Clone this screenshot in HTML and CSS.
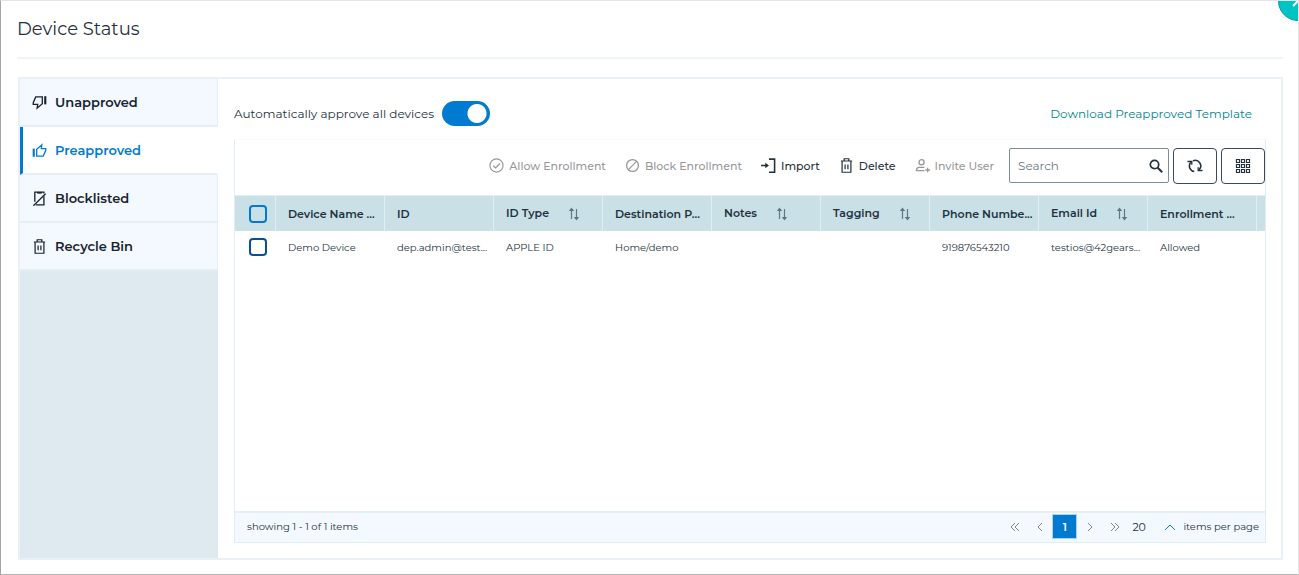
FILE: index.html
```html
<!DOCTYPE html>
<html lang="en">
<head>
  <meta charset="UTF-8">
  <meta name="viewport" content="width=device-width, initial-scale=1.0">
  <title>Device Status</title>
  <link rel="stylesheet" href="styles.css">
</head>
<body>

  <svg class="sprite" aria-hidden="true">
    <symbol id="i-trash" viewBox="0 0 16 16">
      <path d="M2 3.200h12M5.500 2.700V.8h5v1.900M3.300 3.500v11.700h9.400V3.500M6.500 7v5M9.500 7v5" fill="none" stroke="currentColor" stroke-width="1.300"/>
    </symbol>
    <symbol id="i-sort" viewBox="0 0 12 14">
      <path d="M3.500 2v10M8.500 2v10" fill="none" stroke="currentColor" stroke-width="1.200"/>
      <path d="M.8 4 3.500.5 6.200 4zM5.800 10l2.700 3.500L11.200 10z" fill="currentColor"/>
    </symbol>
  </svg>

  <div class="modal">
    <header class="modal-header">
      <h1>Device Status</h1>
      <button class="close-btn" type="button" aria-label="Close">
        <svg viewBox="0 0 14 14"><path d="M2 2l10 10M12 2L2 12" fill="none" stroke="currentColor" stroke-width="2"/></svg>
      </button>
    </header>

    <div class="panel">
      <nav class="sidebar">
        <a href="#" class="tab">
          <svg viewBox="0 0 16 16"><path d="M11 2H4L1.300 8.200V10h4.800l-.6 4L11 9.300z" fill="none" stroke="currentColor" stroke-width="1.400"/><path d="M13 1.300h2.300V10H13z" fill="currentColor"/></svg>
          Unapproved
        </a>
        <a href="#" class="tab active">
          <svg viewBox="0 0 16 16"><path d="M5 14h7l2.700-6.200V6H9.900l.6-4L5 6.700z" fill="none" stroke="currentColor" stroke-width="1.400"/><path d="M.7 6H3v8.700H.7z" fill="currentColor"/></svg>
          Preapproved
        </a>
        <a href="#" class="tab">
          <svg viewBox="0 0 16 16"><path d="M3 11.500V1.200h9.700v1.500M12.700 5.500v9.300H4" fill="none" stroke="currentColor" stroke-width="1.400"/><path d="M5.500 1h5v1.800h-5z" fill="currentColor"/><path d="M14.500 3 1.500 15.700" stroke="currentColor" stroke-width="1.400"/></svg>
          Blocklisted
        </a>
        <a href="#" class="tab">
          <svg viewBox="0 0 16 16"><use href="#i-trash"/></svg>
          Recycle Bin
        </a>
      </nav>

      <main class="content">
        <div class="top-row">
          <label for="auto-approve">Automatically approve all devices</label>
          <input class="switch" type="checkbox" id="auto-approve" checked>
          <a href="#" class="template-link">Download Preapproved Template</a>
        </div>

        <div class="grid">
          <div class="toolbar">
            <button class="tool" type="button" disabled>
              <svg viewBox="0 0 16 16"><circle cx="8" cy="8" r="7" fill="none" stroke="currentColor" stroke-width="1.300"/><path d="M4.500 8.200l2.500 2.400 4.700-4.800" fill="none" stroke="currentColor" stroke-width="1.400"/></svg>
              Allow Enrollment
            </button>
            <button class="tool" type="button" disabled>
              <svg viewBox="0 0 16 16"><circle cx="8" cy="8" r="6.300" fill="none" stroke="currentColor" stroke-width="1.400"/><path d="M12.400 3.600l-8.800 8.800" stroke="currentColor" stroke-width="1.400"/></svg>
              Block Enrollment
            </button>
            <button class="tool" type="button">
              <svg viewBox="0 0 16 16"><path d="M8.500 1.200h6v14h-6M0 8h7" fill="none" stroke="currentColor" stroke-width="1.700"/><path d="M4.500 5 8.500 8l-4 3z" fill="currentColor"/></svg>
              Import
            </button>
            <button class="tool" type="button">
              <svg viewBox="0 0 16 16"><use href="#i-trash"/></svg>
              Delete
            </button>
            <button class="tool" type="button" disabled>
              <svg viewBox="0 0 16 16"><circle cx="7" cy="4.500" r="2.700" fill="none" stroke="currentColor" stroke-width="1.400"/><path d="M10 10H4.500C2.500 10 1.500 11 1.500 13.500h8.500M11 12.800h5M13.500 10.300v5" fill="none" stroke="currentColor" stroke-width="1.400"/></svg>
              Invite User
            </button>
            <div class="search">
              <input type="text" placeholder="Search" aria-label="Search">
              <svg viewBox="0 0 14 14"><circle cx="5.500" cy="5.500" r="4.200" fill="none" stroke="currentColor" stroke-width="1.700"/><path d="M8.500 8.500l4.700 4.700" stroke="currentColor" stroke-width="2"/></svg>
            </div>
            <button class="icon-btn" type="button" aria-label="Refresh">
              <svg viewBox="0 0 16 16"><path d="M3.900 4.300A5.500 5.500 0 0 0 7.300 13.500M6 2.800A5.500 5.500 0 0 1 12.100 11.700" fill="none" stroke="currentColor" stroke-width="1.600"/><path d="M.5 3.500h4.300v3.300M15.500 12.500h-4.300V9.200" fill="none" stroke="currentColor" stroke-width="1.300"/></svg>
            </button>
            <button class="icon-btn" type="button" aria-label="Columns">
              <svg viewBox="0 0 16 16"><path d="M1.500 1.500h3v3h-3zM6.500 1.500h3v3h-3zM11.500 1.500h3v3h-3zM1.500 6.500h3v3h-3zM6.500 6.500h3v3h-3zM11.500 6.500h3v3h-3zM1.500 11.500h3v3h-3zM6.500 11.500h3v3h-3zM11.500 11.500h3v3h-3z" fill="none" stroke="currentColor" stroke-width="1.200"/></svg>
            </button>
          </div>

          <div class="table-wrap">
            <table>
              <colgroup>
                <col class="col-check">
                <col span="9">
                <col class="col-scroll">
              </colgroup>
              <thead>
                <tr>
                  <th class="check"><input type="checkbox" aria-label="Select all"></th>
                  <th>Device Name ...</th>
                  <th>ID</th>
                  <th>ID Type <svg class="sort"><use href="#i-sort"/></svg></th>
                  <th>Destination P...</th>
                  <th>Notes <svg class="sort"><use href="#i-sort"/></svg></th>
                  <th>Tagging <svg class="sort"><use href="#i-sort"/></svg></th>
                  <th>Phone Numbe...</th>
                  <th>Email Id <svg class="sort"><use href="#i-sort"/></svg></th>
                  <th>Enrollment ...</th>
                  <th></th>
                </tr>
              </thead>
              <tbody>
                <tr>
                  <td class="check"><input type="checkbox" aria-label="Select Demo Device"></td>
                  <td>Demo Device</td>
                  <td>dep.admin@test...</td>
                  <td>APPLE ID</td>
                  <td>Home/demo</td>
                  <td></td>
                  <td></td>
                  <td>919876543210</td>
                  <td>testios@42gears...</td>
                  <td>Allowed</td>
                  <td></td>
                </tr>
              </tbody>
            </table>
          </div>

          <footer class="pager">
            <span class="summary">showing 1 - 1 of 1 items</span>
            <button type="button" aria-label="First page"><svg viewBox="0 0 10 10"><path d="M5 1 1 5l4 4M9 1 5 5l4 4"/></svg></button>
            <button type="button" aria-label="Previous page"><svg viewBox="0 0 10 10"><path d="M7 1 3 5l4 4"/></svg></button>
            <button type="button" class="current">1</button>
            <button type="button" aria-label="Next page"><svg viewBox="0 0 10 10"><path d="M3 1l4 4-4 4"/></svg></button>
            <button type="button" aria-label="Last page"><svg viewBox="0 0 10 10"><path d="M1 1l4 4-4 4M5 1l4 4-4 4"/></svg></button>
            <div class="page-size">
              <select id="page-size"><option>20</option><option>50</option></select>
              <svg viewBox="0 0 10 10"><path d="M0 8l5-5 5 5"/></svg>
            </div>
            <label for="page-size">items per page</label>
          </footer>
        </div>
      </main>
    </div>
  </div>

</body>
</html>
```
FILE: styles.css
```css
* {
  box-sizing: border-box;
}
body {
  margin: 0;
  font-family: 'Montserrat', 'Inter', sans-serif;
  font-size: 12px;
  color: #24323e;
  background-color: #fff;
}
button, input, select {
  font-family: inherit;
  color: inherit;
}
button {
  cursor: pointer;
}
a {
  text-decoration: none;
}
.sprite {
  display: none;
}

.modal {
  position: relative;
  display: flex;
  flex-direction: column;
  min-height: 100vh;
  padding: 0 15px 14px 16px;
  border: 1px solid #e6e6e6;
  border-left-color: #a5a5a5;
  border-bottom-color: #b5b5b5;
  overflow: hidden;
}
.modal-header {
  height: 58px;
  padding-top: 16px;
  border-bottom: 2px solid #eef4f9;
}
h1 {
  margin: 0;
  font-size: 18px;
  line-height: 24px;
  font-weight: 400;
}
.close-btn {
  position: absolute;
  top: -20px;
  right: -20px;
  width: 40px;
  height: 40px;
  padding: 0;
  border: 1px solid #0a9c9e;
  border-radius: 50%;
  background-color: #00c4c4;
  color: #fff;
}
.close-btn svg {
  display: block;
  width: 14px;
  height: 14px;
  margin: auto;
}

.panel {
  flex: 1;
  display: flex;
  margin: 18px 0 0 1px;
  border: 2px solid #e9f1f6;
}

.sidebar {
  width: 198px;
  flex-shrink: 0;
  background-color: #dfeaf0;
}
.tab {
  display: flex;
  align-items: center;
  gap: 8px;
  height: 48px;
  padding-left: 12px;
  border-bottom: 2px solid #e4eef4;
  border-right: 1px solid #e4eef4;
  background-color: #f3f9fe;
  color: #17232e;
  font-size: 13px;
  font-weight: 600;
}
.tab svg {
  width: 15px;
  height: 15px;
}
.tab.active {
  padding-left: 9px;
  border-left: 3px solid #007bd1;
  border-right-color: #fff;
  background-color: #fff;
  color: #007bd1;
}

.content {
  flex: 1;
  min-width: 0;
  display: flex;
  flex-direction: column;
  padding: 21px 15px 15px 16px;
}
.top-row {
  display: flex;
  align-items: center;
  height: 26px;
  margin-bottom: 13px;
}
.switch {
  appearance: none;
  width: 48px;
  height: 25px;
  margin: 0 0 0 8px;
  border-radius: 13px;
  background: radial-gradient(circle at 35px 50%, #fff 9px, #007bd1 10px);
}
.template-link {
  margin-left: auto;
  padding-right: 14px;
  color: #00868b;
}

.grid {
  flex: 1;
  display: flex;
  flex-direction: column;
  border: 1px solid #e0edf3;
  border-top-color: #f8fafb;
}
.toolbar {
  display: flex;
  align-items: center;
  justify-content: flex-end;
  height: 55px;
  padding-bottom: 4px;
}
.tool {
  display: flex;
  align-items: center;
  gap: 5px;
  margin-right: 19px;
  padding: 0;
  border: none;
  background: none;
  font-size: 11px;
  font-weight: 500;
  white-space: nowrap;
}
.tool svg {
  width: 15px;
  height: 15px;
}
.tool:disabled {
  color: #999;
  cursor: default;
}
.search {
  display: flex;
  align-items: center;
  width: 160px;
  height: 35px;
  padding: 0 5px 0 8px;
  border: 1px solid #7b8d97;
  border-radius: 2px;
}
.tool + .search {
  margin-left: -4px;
}
.search input {
  flex: 1;
  min-width: 0;
  padding: 0;
  border: none;
  outline: none;
  background: none;
  font-size: 12px;
}
.search input::placeholder {
  color: #6d7780;
}
.search svg {
  width: 14px;
  height: 14px;
}
.icon-btn {
  width: 44px;
  height: 36px;
  margin-left: 4px;
  padding: 0;
  border: 1px solid #3c4954;
  border-radius: 4px;
  background-color: #fff;
}
.icon-btn svg {
  display: block;
  width: 16px;
  height: 16px;
  margin: auto;
}

.table-wrap {
  flex: 1;
}
table {
  width: 100%;
  table-layout: fixed;
  border-collapse: separate;
  border-spacing: 0;
}
.col-check {
  width: 41px;
}
.col-scroll {
  width: 8px;
}
th, td {
  padding: 0 0 0 12px;
  text-align: left;
  white-space: nowrap;
  overflow: hidden;
}
th {
  height: 36px;
  border-top: 1px solid #e0edf3;
  border-right: 1px solid #e0edf3;
  background-color: #c9e0e6;
  font-size: 11px;
  font-weight: 600;
}
th:last-child {
  padding: 0;
  border-right: none;
}
td {
  height: 32px;
  font-size: 10px;
}
td:last-child {
  padding: 0;
}
.sort {
  width: 12px;
  height: 14px;
  margin-left: 16px;
  vertical-align: middle;
  color: #607783;
}
.check {
  padding-left: 14px;
}
.check input {
  appearance: none;
  display: block;
  width: 18px;
  height: 18px;
  margin: 0;
  border: 2px solid #0a4f91;
  border-radius: 4px;
}
th.check input {
  border-color: #007bd1;
}

.pager {
  display: flex;
  align-items: center;
  height: 31px;
  padding: 0 6px 2px 12px;
  border-top: 2px solid #e6f0f4;
  background-color: #f3f9fe;
  font-size: 10px;
}
.summary {
  margin-right: auto;
}
.pager button {
  width: 25px;
  height: 25px;
  padding: 0;
  border: none;
  background: none;
  color: #7c8790;
}
.pager svg {
  width: 10px;
  height: 10px;
  fill: none;
  stroke: currentColor;
}
.pager .current {
  border: 1px solid #a9d3f0;
  background-color: #007bd1;
  color: #fff;
  font-size: 11px;
  font-weight: 600;
}
.page-size {
  display: flex;
  align-items: center;
  margin: 0 8px 0 5px;
  color: #007bd1;
}
.page-size select {
  appearance: none;
  width: 33px;
  padding: 0;
  border: none;
  background: none;
  color: #24323e;
  font-size: 11px;
}
```
